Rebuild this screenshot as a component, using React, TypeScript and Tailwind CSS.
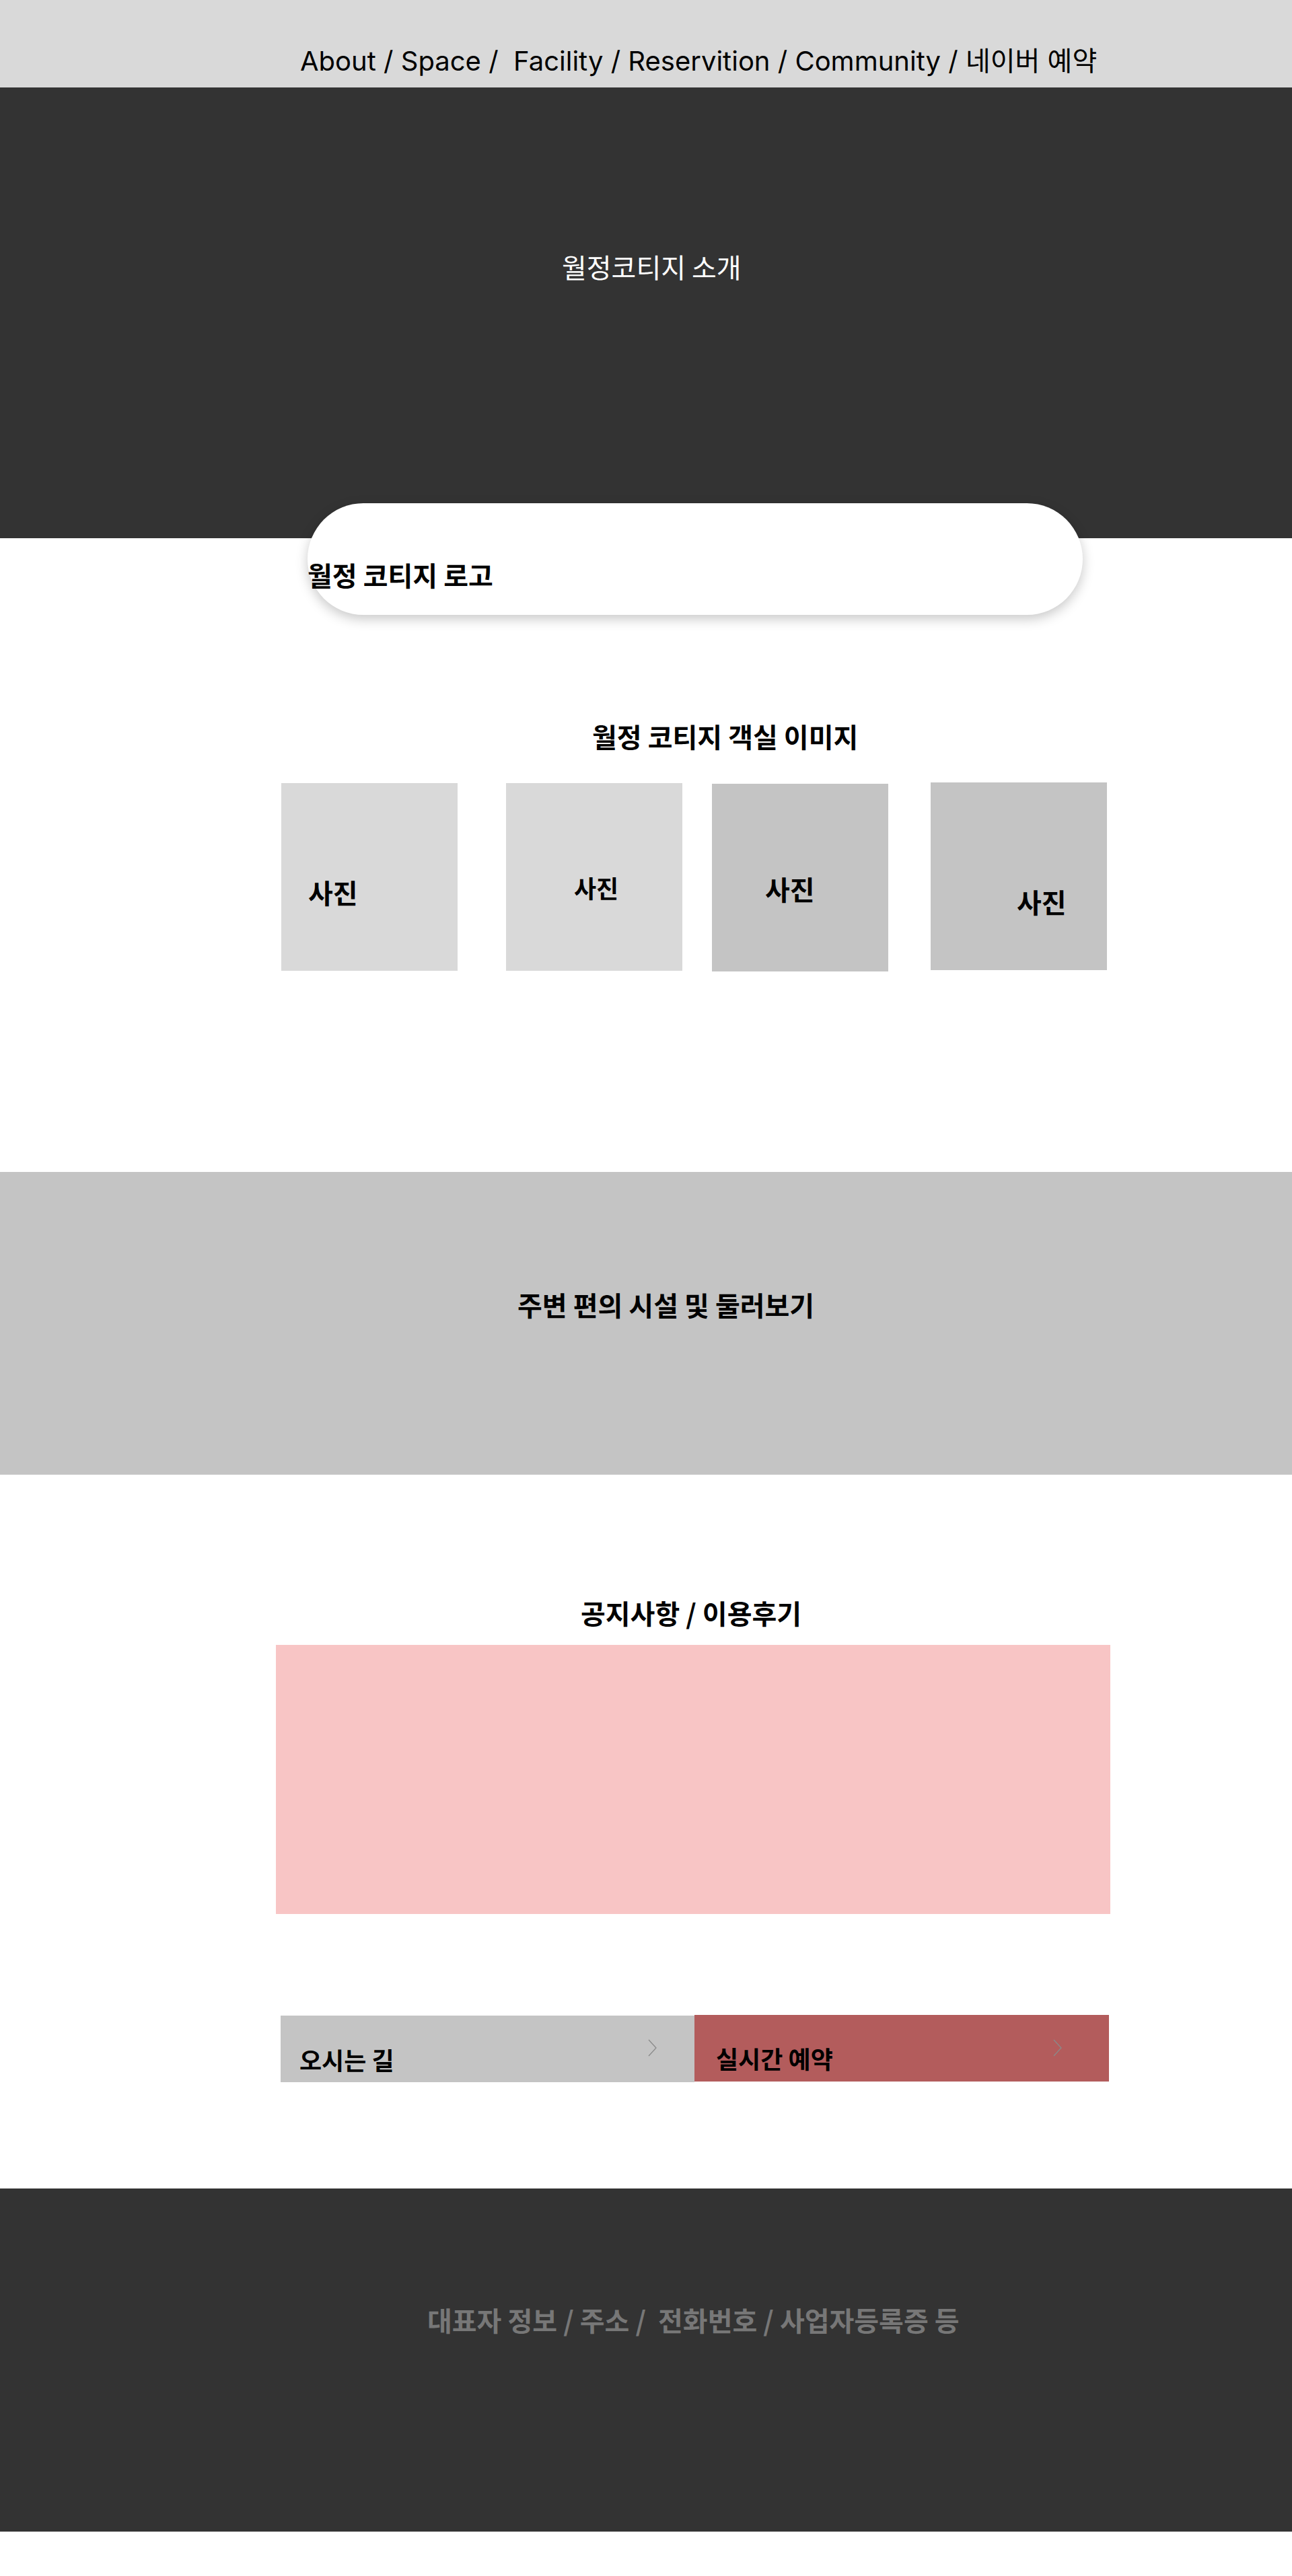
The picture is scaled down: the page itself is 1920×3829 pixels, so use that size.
const ko = "font-['Noto_Sans_CJK_KR',sans-serif]";

function Chevron({ className }: { className?: string }) {
  return (
    <svg
      width="16"
      height="26"
      viewBox="0 0 16 26"
      fill="none"
      className={className}
    >
      <path d="M2 1 L13 13 L2 25" stroke="#8a8a8a" strokeWidth="1.3" />
    </svg>
  );
}

function Photo({
  tone,
  size,
  pad,
  offset,
}: {
  tone: string;
  size: string;
  pad: string;
  offset: string;
}) {
  return (
    <div className={`w-[262px] h-[279px] shrink-0 ${tone} ${offset} ${pad}`}>
      <span className={`${ko} ${size} font-bold leading-none text-black`}>사진</span>
    </div>
  );
}

export default function App() {
  return (
    <div className="w-[1920px] bg-white">
      {/* top nav */}
      <header className="h-[130px] bg-[#d9d9d9] pt-[71px] pl-[446px]">
        <p className="font-['Inter','Noto_Sans_CJK_KR',sans-serif] text-[40px] leading-none text-black whitespace-pre">
          About / Space /  Facility / Reservition / Community / 네이버 예약
        </p>
      </header>

      {/* hero */}
      <section className="h-[670px] bg-[#333333] pt-[246px] pl-[835px]">
        <h1 className={`${ko} text-[40px] leading-none text-white`}>월정코티지 소개</h1>
      </section>

      {/* logo pill */}
      <div className="relative -mt-[52px] ml-[457px] w-[1152px] h-[166px] rounded-full bg-white shadow-[0_6px_18px_rgba(0,0,0,0.22)] pt-[86px]">
        <p className={`${ko} text-[40px] font-bold leading-none text-black`}>월정 코티지 로고</p>
      </div>

      {/* rooms */}
      <section className="pt-[160px]">
        <h2 className={`${ko} ml-[880px] text-[40px] font-bold leading-none text-black`}>
          월정 코티지 객실 이미지
        </h2>
        <div className="flex items-start mt-[49px] pl-[418px]">
          <Photo tone="bg-[#d9d9d9]" size="text-[40px]" pad="pl-[40px] pt-[142px]" offset="mt-[1px]" />
          <Photo tone="bg-[#d9d9d9] ml-[72px]" size="text-[36px]" pad="pl-[101px] pt-[137px]" offset="mt-[1px]" />
          <Photo tone="bg-[#c4c4c4] ml-[44px]" size="text-[40px]" pad="pl-[79px] pt-[136px]" offset="mt-[2px]" />
          <Photo tone="bg-[#c4c4c4] ml-[63px]" size="text-[40px]" pad="pl-[128px] pt-[157px]" offset="mt-0" />
        </div>
      </section>

      {/* around */}
      <section className="mt-[298px] h-[450px] bg-[#c4c4c4] pt-[177px] pl-[769px]">
        <h2 className={`${ko} text-[40px] font-bold leading-none text-black`}>
          주변 편의 시설 및 둘러보기
        </h2>
      </section>

      {/* notice / review */}
      <section className="pt-[185px]">
        <h2 className={`${ko} ml-[863px] text-[40px] font-bold leading-none text-black`}>
          공지사항 / 이용후기
        </h2>
        <div className="mt-[28px] ml-[410px] w-[1240px] h-[400px] bg-[#f8c5c5]" />
      </section>

      {/* quick links */}
      <div className="flex items-start mt-[150px] pl-[417px]">
        <a className="relative w-[615px] h-[99px] bg-[#c4c4c4] mt-[1px] pl-[28px] pt-[47px]">
          <span className={`${ko} text-[36px] font-bold leading-none text-black`}>오시는 길</span>
          <Chevron className="absolute left-[545px] top-[35px]" />
        </a>
        <a className="relative w-[616px] h-[99px] bg-[#b35c5c] pl-[32px] pt-[46px]">
          <span className={`${ko} text-[36px] font-bold leading-none text-black`}>실시간 예약</span>
          <Chevron className="absolute left-[532px] top-[36px]" />
        </a>
      </div>

      {/* footer */}
      <footer className="mt-[158px] h-[510px] bg-[#333333] pt-[175px] pl-[635px]">
        <p className={`${ko} text-[40px] font-bold leading-none text-[#777777] whitespace-pre`}>
          대표자 정보 / 주소 /  전화번호 / 사업자등록증 등
        </p>
      </footer>
    </div>
  );
}
